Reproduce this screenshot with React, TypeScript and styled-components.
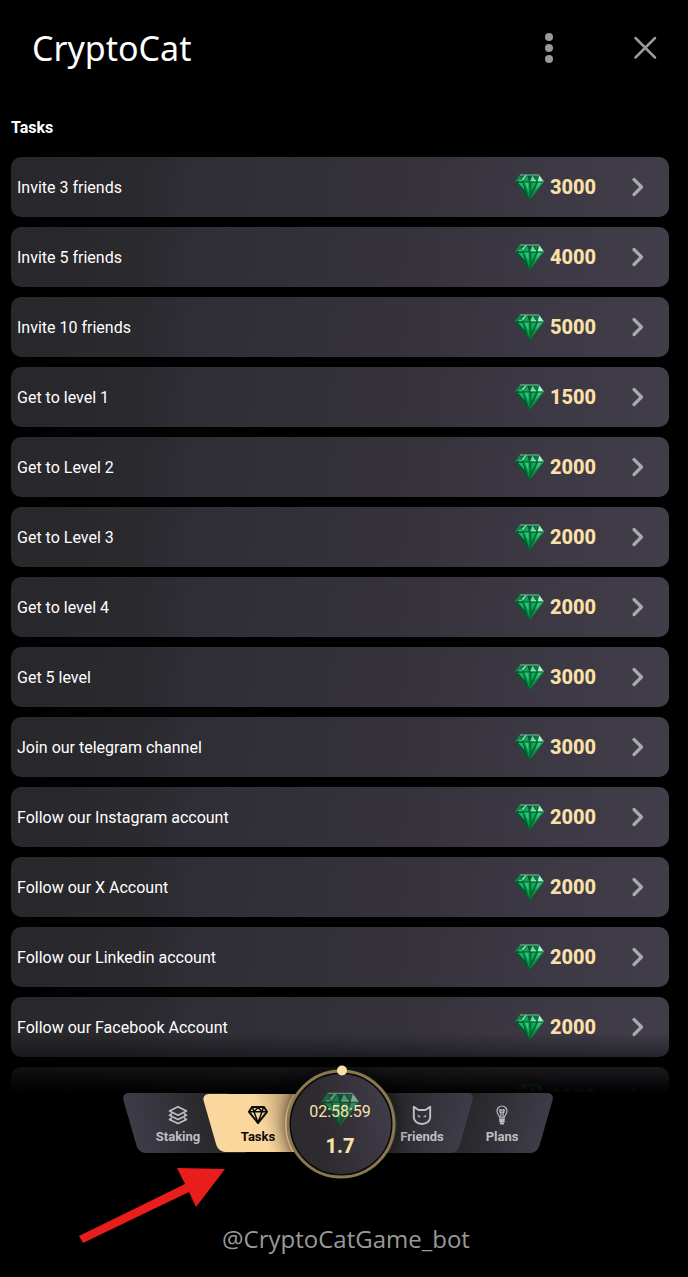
import React from "react";
import styled, { createGlobalStyle, css } from "styled-components";

const GlobalStyle = createGlobalStyle`
  *, *::before, *::after { box-sizing: border-box; }
  body {
    margin: 0;
    background: #000;
    color: #fff;
    font-family: Roboto, "Liberation Sans", sans-serif;
  }
  button { font: inherit; color: inherit; border: 0; background: none; padding: 0; cursor: pointer; }
`;

const Shell = styled.div`
  display: flex;
  flex-direction: column;
  height: 100vh;
  overflow: hidden;
`;

const Header = styled.header`
  display: flex;
  align-items: center;
  justify-content: space-between;
  height: 96px;
  padding: 0 23px 0 32px;
`;

const Title = styled.h1`
  margin: 0;
  font-family: "Noto Sans", "Open Sans", sans-serif;
  font-size: 34px;
  line-height: 48px;
  font-weight: 400;
`;

const HeaderActions = styled.div`
  display: flex;
  gap: 56px;
`;

const IconButton = styled.button`
  display: grid;
  place-items: center;
  width: 40px;
  height: 40px;
  color: #999;
`;

const Content = styled.main`
  position: relative;
  flex: 1;
  min-height: 0;
  display: flex;
  flex-direction: column;
  padding: 20px 19px 0 11px;
`;

const SectionTitle = styled.h2`
  margin: 0 0 18px;
  font-size: 16px;
  line-height: 23px;
  font-weight: 700;
`;

const TaskList = styled.ul`
  flex: 1;
  min-height: 0;
  margin: 0;
  padding: 0;
  list-style: none;
  display: flex;
  flex-direction: column;
  gap: 10px;
  overflow-y: auto;
  scrollbar-width: none;
`;

const Fade = styled.div`
  position: absolute;
  inset: auto 0 0 0;
  height: 60px;
  pointer-events: none;
  background: linear-gradient(to bottom, transparent, rgba(0, 0, 0, 0.5) 50%, rgba(0, 0, 0, 0.88) 88%, #000);
`;

const TaskItem = styled.li`
  flex: none;
`;

const TaskButton = styled.button`
  display: flex;
  align-items: center;
  width: 100%;
  height: 60px;
  padding: 0 25px 0 6px;
  border-radius: 10px;
  text-align: left;
  background: linear-gradient(100deg, #28272b 0%, #2a292d 18%, #2f2d35 27%, #35323c 60%, #3c3944 80%, #413d49 100%);
`;

const TaskName = styled.span`
  flex: 1;
  padding-top: 2px;
  font-size: 16px;
  line-height: 24px;
`;

const Reward = styled.span`
  display: flex;
  align-items: center;
  gap: 6px;
  width: 116px;
  color: #fbe0a9;
  font-size: 20px;
  line-height: 24px;
  font-weight: 800;
`;

const Bottom = styled.footer`
  display: flex;
  flex-direction: column;
  align-items: center;
  height: 184px;
  padding-right: 8px;
`;

const Nav = styled.nav`
  position: relative;
  display: flex;
  justify-content: center;
  width: 404px;
  height: 60px;
`;

const NavGap = styled.div`
  flex: 1;
`;

type Side = "left" | "right";

const NavButton = styled.button<{ $side: Side; $active?: boolean; $front?: boolean }>`
  position: relative;
  display: flex;
  flex-direction: column;
  align-items: center;
  gap: 1px;
  width: 80px;
  height: 60px;
  padding-top: 12px;
  z-index: ${(p) => (p.$front ? 1 : 0)};
  color: ${(p) => (p.$active ? "#0d0b0c" : "#bfbec3")};
  font-size: 13px;
  line-height: 18px;
  font-weight: 700;

  &::before {
    content: "";
    position: absolute;
    z-index: -1;
    border-radius: 7px;
    ${(p) =>
      p.$side === "left"
        ? css`
            inset: 0 -24px 0 -8px;
            transform: skewX(16deg);
            background: linear-gradient(to right, #3f3c49, #28272a 75%);
          `
        : css`
            inset: 0 -4px 0 -24px;
            transform: skewX(-16deg);
            background: linear-gradient(to right, #28272a 25%, #3f3c49);
          `}
    ${(p) =>
      p.$active &&
      css`
        top: 1px;
        bottom: 1px;
        background: linear-gradient(to right, #f9d79d 45%, #c5a578 75%, #6f5d45);
      `}
  }
`;

const Dial = styled.button`
  position: absolute;
  z-index: 2;
  top: -25px;
  left: 50%;
  width: 112px;
  height: 112px;
  margin-left: -55px;
  display: flex;
  flex-direction: column;
  align-items: center;
  padding: 32px 2px 0 0;
  border-radius: 50%;
  color: #fbe0a9;
  box-shadow: 0 0 16px rgba(0, 0, 0, 0.6);
`;

const DialFace = styled.svg`
  position: absolute;
  inset: 0;
  overflow: visible;
`;

const DialGem = styled.span`
  position: absolute;
  top: 24px;
  left: 36px;
  opacity: 0.6;
`;

const Timer = styled.span`
  position: relative;
  font-size: 16px;
  line-height: 24px;
`;

const Rate = styled.span`
  position: relative;
  margin-top: 10px;
  font-size: 20px;
  line-height: 24px;
  font-weight: 800;
`;

const Pointer = styled.svg`
  position: absolute;
  top: 72px;
  left: -60px;
  pointer-events: none;
`;

const Handle = styled.p`
  margin: 68px 0 0;
  padding-left: 12px;
  font-family: "Open Sans", "Noto Sans", sans-serif;
  font-size: 24px;
  line-height: 36px;
  color: #999;
`;

const Gem = ({ size }: { size: number }) => (
  <svg width={size} height={Math.round(size * 0.9)} viewBox="0 0 30 27" aria-hidden="true">
    <path d="M5 1h20l5 7-15 19L0 8z" fill="#057a3c" />
    <path d="M5 1 0 8h8z" fill="#0a8f4a" />
    <path d="M5 1h8L8 8z" fill="#7fdcae" />
    <path d="M5 1h6L7 5z" fill="#0b6b38" />
    <path d="M13 1 8 8h7z" fill="#0fa75a" />
    <path d="M13 1h5l-3 7z" fill="#05602f" />
    <path d="M18 1l-3 7h8z" fill="#65d39b" />
    <path d="M18 1h7l-2 7z" fill="#077c40" />
    <path d="M25 1l5 7h-7z" fill="#b5f0d0" />
    <path d="M0 8h8l7 19z" fill="#05562c" />
    <path d="M3 9h5l2 8z" fill="#14b564" />
    <path d="M8 8h7v19z" fill="#0a9a50" />
    <path d="M10 9h4l0 9z" fill="#2cc67c" />
    <path d="M15 8h8l-8 19z" fill="#05702f" />
    <path d="M17 9h5l-5 9z" fill="#15aa5e" />
    <path d="M23 8h7L15 27z" fill="#079247" />
    <path d="M24 9h4l-7 8z" fill="#37c985" />
    <path d="M5 1h20M1 8h28M8 8l7 18 8-18M5 1l3 7 5-7 2 7 3-7 5 7 2-7" fill="none" stroke="#034523" strokeWidth=".5" />
    <path d="M5 1h20M4 7h3M17 7h5" fill="none" stroke="#9ce8c1" strokeWidth=".8" />
  </svg>
);

const Chevron = () => (
  <svg width="13" height="20" viewBox="0 0 13 20" fill="none" stroke="#aaa9ae" strokeWidth="3.2" strokeLinecap="round" strokeLinejoin="round" aria-hidden="true">
    <path d="M3 2.5 10.5 10 3 17.5" />
  </svg>
);

const StakingIcon = () => (
  <svg width="22" height="22" viewBox="0 0 22 22" fill="none" stroke="currentColor" strokeWidth="1.700" strokeLinejoin="round" strokeLinecap="round">
    <path d="m11 1.800 8.500 4.200L11 10.200 2.500 6z" />
    <path d="m4.500 9-2 1.200L11 14.400l8.500-4.200-2-1.200" />
    <path d="m4.500 13.200-2 1.200L11 18.600l8.500-4.200-2-1.200" />
  </svg>
);

const TasksIcon = () => (
  <svg width="22" height="22" viewBox="0 0 22 22" fill="none" stroke="currentColor" strokeWidth="2" strokeLinejoin="round">
    <path d="M5 2h12l3 4.800L11 18 2 6.800z" />
    <path d="M2 6.800h18M7 6.800l4 10.700 4-10.700M5.500 2.200l1.500 4.600 4-4.600 4 4.600 1.500-4.600" strokeWidth="1.500" />
  </svg>
);

const FriendsIcon = () => (
  <svg width="22" height="22" viewBox="0 0 22 22" fill="none" stroke="currentColor" strokeWidth="1.900" strokeLinejoin="round">
    <path d="M2.800 1.800 7.500 5h7l4.700-3.200V12c0 4.200-3.500 7-8.200 7s-8.200-2.800-8.200-7z" />
    <path d="M7 10.300l2.300 1.500H7.500zM15 10.300l-2.300 1.500h1.800z" fill="currentColor" strokeWidth=".7" />
  </svg>
);

const PlansIcon = () => (
  <svg width="22" height="22" viewBox="0 0 22 22" fill="none" stroke="currentColor" strokeWidth="1.200" strokeLinejoin="round" strokeLinecap="round">
    <path d="M8.700 13c0-2.500-2.700-3.800-2.700-7a5 5 0 0 1 10 0c0 3.200-2.700 4.500-2.700 7z" />
    <path d="M9.900 12.500V8.500L8.600 5c1.200-1 1.800.8 2.400 0 .6.800 1.200-1 2.400 0l-1.300 3.500v4M8.900 7.200h4.200" />
    <path d="M9 14.800h4M9 16.600h4M9.800 18.600h2.400" strokeWidth="1.900" />
  </svg>
);

const TASKS: [string, number][] = [
  ["Invite 3 friends", 3000],
  ["Invite 5 friends", 4000],
  ["Invite 10 friends", 5000],
  ["Get to level 1", 1500],
  ["Get to Level 2", 2000],
  ["Get to Level 3", 2000],
  ["Get to level 4", 2000],
  ["Get 5 level", 3000],
  ["Join our telegram channel", 3000],
  ["Follow our Instagram account", 2000],
  ["Follow our X Account", 2000],
  ["Follow our Linkedin account", 2000],
  ["Follow our Facebook Account", 2000],
  ["Subscribe to our YouTube channel", 2000],
];

export default function App() {
  return (
    <Shell>
      <GlobalStyle />
      <Header>
        <Title>CryptoCat</Title>
        <HeaderActions>
          <IconButton aria-label="Menu">
            <svg width="10" height="32" viewBox="0 0 10 32" fill="currentColor">
              <circle cx="5" cy="5" r="4" />
              <circle cx="5" cy="16" r="4" />
              <circle cx="5" cy="27" r="4" />
            </svg>
          </IconButton>
          <IconButton aria-label="Close">
            <svg width="24" height="24" viewBox="0 0 24 24" stroke="currentColor" strokeWidth="2.500" strokeLinecap="round">
              <path d="M2.500 2 22 21.500M22 2 2.500 21.500" />
            </svg>
          </IconButton>
        </HeaderActions>
      </Header>

      <Content>
        <SectionTitle>Tasks</SectionTitle>
        <TaskList>
          {TASKS.map(([name, reward]) => (
            <TaskItem key={name}>
              <TaskButton>
                <TaskName>{name}</TaskName>
                <Reward>
                  <Gem size={29} />
                  {reward}
                </Reward>
                <Chevron />
              </TaskButton>
            </TaskItem>
          ))}
        </TaskList>
        <Fade />
      </Content>

      <Bottom>
        <Nav>
          <NavButton $side="left">
            <StakingIcon />
            Staking
          </NavButton>
          <NavButton $side="left" $active $front aria-current="page">
            <TasksIcon />
            Tasks
          </NavButton>
          <NavGap />
          <NavButton $side="right" $front>
            <FriendsIcon />
            Friends
          </NavButton>
          <NavButton $side="right">
            <PlansIcon />
            Plans
          </NavButton>
          <Dial>
            <DialFace width="112" height="112" viewBox="0 0 112 112" aria-hidden="true">
              <defs>
                <linearGradient id="face" x1="0" x2="1" y1="0.600" y2="0.400">
                  <stop offset="0.300" stopColor="#2d2a30" />
                  <stop offset="1" stopColor="#403d4a" />
                </linearGradient>
              </defs>
              <circle cx="56" cy="56" r="54" fill="#0b090d" />
              <circle cx="56" cy="56" r="50" fill="url(#face)" />
              <circle cx="56" cy="56" r="53" fill="none" stroke="#8b794e" strokeWidth="3" />
              <circle cx="57" cy="2.500" r="5" fill="#fbe0a9" />
            </DialFace>
            <DialGem>
              <Gem size={38} />
            </DialGem>
            <Timer>02:58:59</Timer>
            <Rate>1.7</Rate>
          </Dial>
          <Pointer width="150" height="80" viewBox="0 0 150 80" aria-hidden="true">
            <path d="M1 71 107 19 99 3l48 1-29 38-7-15L5 78z" fill="#e91d1c" />
          </Pointer>
        </Nav>
        <Handle>@CryptoCatGame_bot</Handle>
      </Bottom>
    </Shell>
  );
}
